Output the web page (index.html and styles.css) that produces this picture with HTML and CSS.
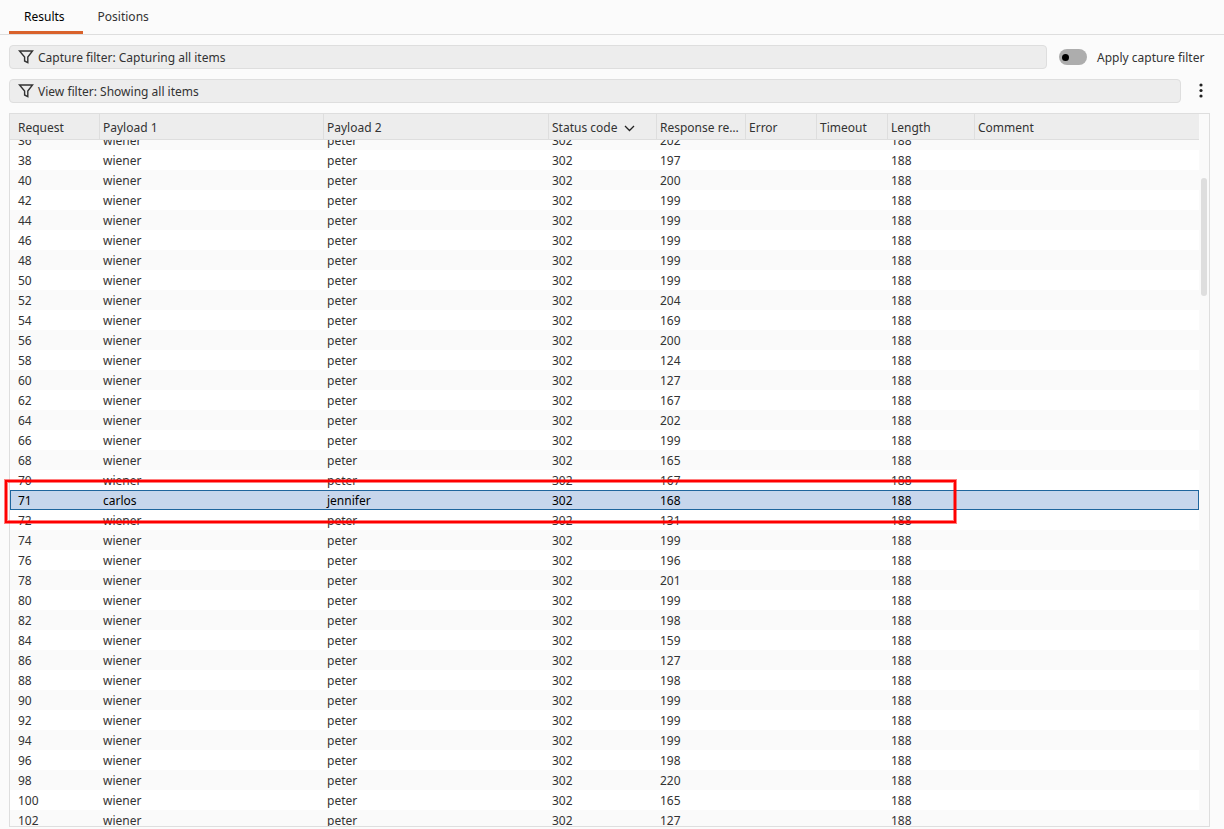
FILE: index.html
```
<!DOCTYPE html>
<html lang="en">
<head>
    <meta charset="UTF-8">
    <meta name="viewport" content="width=device-width, initial-scale=1.0">
    <title>Intruder results</title>
    <link rel="stylesheet" href="styles.css">
</head>
<body>

<nav class="tabs">
    <button class="tab active" type="button">Results</button>
    <button class="tab" type="button">Positions</button>
</nav>

<div class="filter-row">
    <button class="filter" type="button">
        <svg width="16" height="16" viewBox="0 0 16 16"><path d="M1.5 2h13L9.8 8v5.6L6.6 12V8z" fill="none" stroke="#333" stroke-width="1.4"/></svg>
        <span>Capture filter: Capturing all items</span>
    </button>
    <label class="toggle" for="apply-filter">
        <input type="checkbox" id="apply-filter">
        <span>Apply capture filter</span>
    </label>
</div>

<div class="filter-row">
    <button class="filter" type="button">
        <svg width="16" height="16" viewBox="0 0 16 16"><path d="M1.5 2h13L9.8 8v5.6L6.6 12V8z" fill="none" stroke="#333" stroke-width="1.4"/></svg>
        <span>View filter: Showing all items</span>
    </button>
    <button class="menu-btn" type="button" aria-label="Options">
        <svg width="4" height="16" viewBox="0 0 4 16" fill="#222"><circle cx="2" cy="2" r="1.6"/><circle cx="2" cy="7.5" r="1.6"/><circle cx="2" cy="13" r="1.6"/></svg>
    </button>
</div>

<div class="results">
    <div class="scroll-area" id="scroll-area">
        <table>
            <colgroup>
                <col class="col-request"><col class="col-payload1"><col class="col-payload2"><col class="col-status">
                <col class="col-response"><col class="col-flag"><col class="col-flag"><col class="col-length"><col>
            </colgroup>
            <thead>
                <tr>
                    <th>Request</th>
                    <th>Payload 1</th>
                    <th>Payload 2</th>
                    <th>Status code <svg class="sort" width="11" height="7" viewBox="0 0 11 7"><path d="M1 1l4.5 4.5L10 1" fill="none" stroke="#222" stroke-width="1.3"/></svg></th>
                    <th>Response received</th>
                    <th>Error</th>
                    <th>Timeout</th>
                    <th>Length</th>
                    <th>Comment</th>
                </tr>
            </thead>
            <tbody id="rows"></tbody>
        </table>
    </div>
    <div class="scrollbar"><div class="thumb"></div></div>
    <div class="highlight"></div>
</div>

<script>
    const times = [202, 197, 200, 199, 199, 199, 199, 199, 204, 169, 200, 124, 127, 167, 202, 199, 165, 167,
        131, 199, 196, 201, 199, 198, 159, 127, 198, 199, 199, 199, 198, 220, 165, 127];
    const items = times.map((time, i) => ({ id: 36 + i * 2, user: "wiener", pass: "peter", time: time }));
    items.splice(18, 0, { id: 71, user: "carlos", pass: "jennifer", time: 168, selected: true });

    document.getElementById("rows").innerHTML = items.map(item => `
        <tr${item.selected ? ' class="selected"' : ""}>
            <td>${item.id}</td>
            <td>${item.user}</td>
            <td>${item.pass}</td>
            <td>302</td>
            <td>${item.time}</td>
            <td></td>
            <td></td>
            <td>188</td>
            <td></td>
        </tr>
    `).join("");

    // first row is half under the header
    document.getElementById("scroll-area").scrollTop = 10;
</script>

</body>
</html>
```

FILE: styles.css
```
* { box-sizing: border-box; }
body { display: flex; flex-direction: column; height: 100vh; margin: 0; padding-bottom: 2px; overflow: hidden; background: #fbfbfb; color: #333; font-family: "Noto Sans", "Open Sans", sans-serif; font-size: 12px; line-height: 18px; }
button { font: inherit; color: inherit; border: none; background: none; cursor: pointer; }

.tabs { display: flex; height: 35px; padding: 0 9px; border-bottom: 1px solid #dedede; }
.tab { padding: 2px 18px 0 15px; border-bottom: 3px solid transparent; }
.tab.active { color: #000; border-bottom-color: #d9622b; }

.filter-row { display: flex; align-items: center; height: 24px; margin: 10px 16px 0 9px; }
.filter { display: flex; flex: 1; align-items: center; gap: 4px; height: 24px; padding: 0 8px; background: #ededed; border: 1px solid #dedede; border-radius: 4px; }
.filter span, .toggle span { padding-top: 2px; }
.toggle { display: flex; align-items: center; gap: 10px; width: 149px; margin-left: 12px; }
.toggle input { appearance: none; display: flex; align-items: center; width: 28px; height: 16px; margin: 0; padding-left: 3px; background: #adadad; border-radius: 8px; }
.toggle input::before { content: ""; width: 7px; height: 7px; background: #000; border-radius: 50%; }
.toggle input:checked { justify-content: flex-end; padding: 0 3px; background: #d9622b; }
.menu-btn { display: flex; align-items: center; height: 24px; margin-left: 12px; padding: 0 5px 0 6px; }

.results { position: relative; display: flex; flex: 1; min-height: 0; margin: 10px 14px 0 9px; border: 1px solid #dedede; background: #fafafa; }
.scroll-area { flex: 1; overflow: auto; scrollbar-width: none; }
table { width: 100%; table-layout: fixed; border-collapse: separate; border-spacing: 0; }
.col-request { width: 90px; }
.col-payload1 { width: 224px; }
.col-payload2 { width: 225px; }
.col-status { width: 108px; }
.col-response { width: 89px; }
.col-flag { width: 71px; }
.col-length { width: 87px; }
th { position: sticky; top: 0; z-index: 1; height: 26px; padding: 2px 2px 0 3px; overflow: hidden; background: #ededed; border-right: 1px solid #dedede; border-bottom: 1px solid #dedede; font-weight: normal; text-align: left; text-overflow: ellipsis; white-space: nowrap; }
th:last-child { border-right: none; }
.sort { margin-left: 3px; }
td { height: 20px; padding: 2px 3px 0; white-space: nowrap; }
th:first-child, td:first-child { padding-left: 8px; }
tbody tr { background: #fff; }
tbody tr:nth-child(odd) { background: #fafafa; }
tbody tr.selected { background: #c7d6ec; color: #000; outline: 1px solid #1f659d; outline-offset: -1px; }

.scrollbar { width: 10px; padding: 64px 2px 0; }
.thumb { height: 118px; background: #dedede; border-radius: 3px; }

.highlight { position: absolute; top: 366px; left: -5px; width: 951px; height: 43px; z-index: 2; border: 2px solid #f00; box-shadow: 0 0 0 1px rgba(255,0,0,0.5), inset 0 0 0 1px rgba(255,0,0,0.5); pointer-events: none; }
```
